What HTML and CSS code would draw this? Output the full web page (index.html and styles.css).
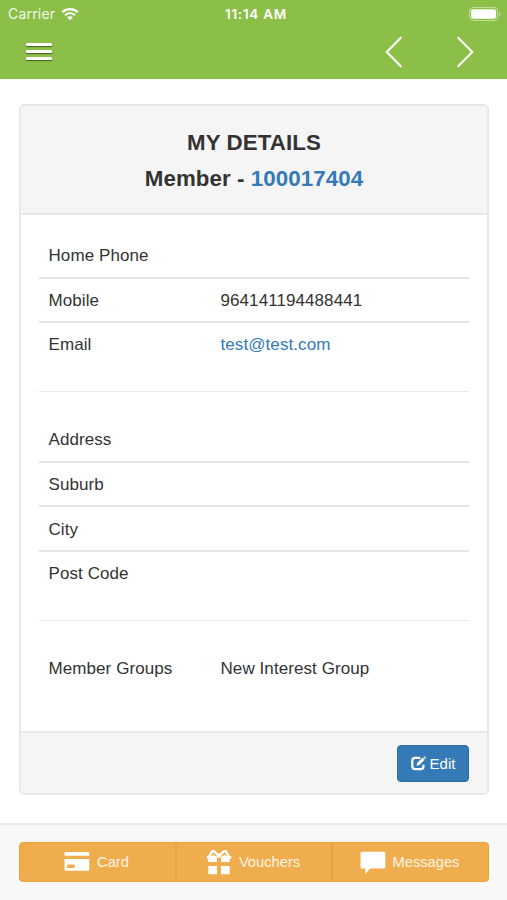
FILE: index.html
```html
<!DOCTYPE html>
<html lang="en">
<head>
    <meta charset="UTF-8">
    <meta name="viewport" content="width=device-width, initial-scale=1.0">
    <title>My Details</title>
    <link rel="stylesheet" href="styles.css">
</head>
<body>
    <header class="top">
        <div class="status">
            <span class="carrier">Carrier
                <svg class="wifi" width="18" height="14" viewBox="0 0 18 14">
                    <path d="M1.2 5.2C5.7 1 12.3 1 16.8 5.2" fill="none" stroke="#fff" stroke-width="2.3"/>
                    <path d="M4 8.2C6.9 5.6 11.1 5.6 14 8.2" fill="none" stroke="#fff" stroke-width="2.2"/>
                    <path d="M6 10.3C7.8 8.8 10.2 8.8 12 10.3L9 13.3Z" fill="#fff"/>
                </svg>
            </span>
            <span class="time">11:14 AM</span>
            <svg class="battery" width="32" height="14" viewBox="0 0 32 14">
                <rect x="0.5" y="0.5" width="28" height="13" rx="3.5" fill="none" stroke="#c1dd99"/>
                <rect x="2" y="2.2" width="25" height="9.6" rx="2" fill="#fff"/>
                <path d="M30 5C31.7 5.6 31.7 8.4 30 9Z" fill="#c1dd99"/>
            </svg>
        </div>
        <nav class="nav">
            <button class="menu" aria-label="Menu"><i></i><i></i><i></i></button>
            <div class="arrows">
                <svg width="18" height="32" viewBox="0 0 18 32"><path d="M16.3 1.3L1.7 16L16.3 30.7"/></svg>
                <svg width="18" height="32" viewBox="0 0 18 32"><path d="M1.7 1.3L16.3 16L1.7 30.7"/></svg>
            </div>
        </nav>
    </header>

    <main class="panel">
        <div class="panel-heading">
            <h1>MY DETAILS</h1>
            <h1>Member - <a href="#">100017404</a></h1>
        </div>
        <div class="panel-body">
            <dl class="rows">
                <div class="row"><dt>Home Phone</dt><dd></dd></div>
                <div class="row"><dt>Mobile</dt><dd>964141194488441</dd></div>
                <div class="row"><dt>Email</dt><dd><a href="#">test@test.com</a></dd></div>
            </dl>
            <hr>
            <dl class="rows">
                <div class="row"><dt>Address</dt><dd></dd></div>
                <div class="row"><dt>Suburb</dt><dd></dd></div>
                <div class="row"><dt>City</dt><dd></dd></div>
                <div class="row"><dt>Post Code</dt><dd></dd></div>
            </dl>
            <hr>
            <dl class="rows">
                <div class="row"><dt>Member Groups</dt><dd>New Interest Group</dd></div>
            </dl>
        </div>
        <div class="panel-footer">
            <button class="edit">
                <svg width="16" height="15" viewBox="0 0 16 15">
                    <path d="M9.3 1.9H4.2Q1.3 1.9 1.3 4.8V10.2Q1.3 13.1 4.2 13.1H9.6Q12.5 13.1 12.5 10.2V8.7" fill="none" stroke="#fff" stroke-width="2.2"/>
                    <path d="M5.4 9.8L6.3 6.7L11.6 1.6L13.7 3.7L8.4 9Z" fill="#fff"/>
                    <path d="M12.4 0.9L13.2 0.2L15.2 2.1L14.4 3Z" fill="#fff"/>
                </svg>
                Edit
            </button>
        </div>
    </main>

    <footer class="bottom">
        <div class="tabs">
            <button class="tab">
                <svg width="26" height="26" viewBox="0 0 26 26">
                    <path d="M0.5 4.3Q0.5 3 1.8 3H24Q25.3 3 25.3 4.3V6.7H0.5Z" fill="#fff"/>
                    <path fill-rule="evenodd" d="M0.5 10H25.3V20.5Q25.3 21.8 24 21.8H1.8Q0.5 21.8 0.5 20.5ZM3.2 15.4V19H10.6V15.4Z" fill="#fff"/>
                </svg>
                <span>Card</span>
            </button>
            <button class="tab">
                <svg width="26" height="26" viewBox="0 0 26 26">
                    <path d="M3.2 7.5L5.8 2.8Q6.6 1.6 8 2.4L13 6.4L18 2.4Q19.4 1.6 20.2 2.8L22.8 7.5" fill="none" stroke="#fff" stroke-width="2.4"/>
                    <path d="M0.8 7H5.6L7.4 5.8L11 8.2V13H2.3V9.8H0.8ZM25.2 7H20.4L18.6 5.8L15 8.2V13H23.7V9.8H25.2ZM2.3 17H11V25.2H2.3ZM15 17H23.7V25.2H15Z" fill="#fff"/>
                    <path d="M10.2 7L13 4.6L15.8 7L14.4 8.6H11.6Z" fill="#fff"/>
                </svg>
                <span>Vouchers</span>
            </button>
            <button class="tab">
                <svg width="26" height="26" viewBox="0 0 26 26">
                    <path d="M1.8 2.8H24Q25.3 2.8 25.3 4.1V18.3Q25.3 19.6 24 19.6H10.3L5.3 25V19.6H1.8Q0.5 19.6 0.5 18.3V4.1Q0.5 2.8 1.8 2.8Z" fill="#fff"/>
                </svg>
                <span>Messages</span>
            </button>
        </div>
    </footer>
</body>
</html>
```
FILE: styles.css
```css
* {
    box-sizing: border-box;
}
body {
    display: flex;
    flex-direction: column;
    height: 900px;
    margin: 0;
    background-color: #fff;
    color: #333;
    font-family: "Liberation Sans", Arial, sans-serif;
    font-size: 17px;
    letter-spacing: 0.08px;
    overflow: hidden;
}
a {
    color: #337ab7;
    text-decoration: none;
}
button {
    margin: 0;
    padding: 0;
    border: 0;
    background: none;
    color: #fff;
    font-family: inherit;
}

/* green bar */
.top {
    height: 79px;
    background-color: #8bbf48;
    color: #fff;
}
.status {
    display: grid;
    grid-template-columns: 1fr auto 1fr;
    align-items: center;
    height: 27px;
    padding: 0 6px 0 8px;
    font-family: Inter, sans-serif;
}
.carrier {
    display: flex;
    align-items: center;
    gap: 6px;
    color: #f1f8e5;
    font-size: 14px;
    letter-spacing: 0.2px;
}
.time {
    font-size: 13.5px;
    font-weight: 600;
    letter-spacing: 0.75px;
    padding-left: 3px;
}
.battery {
    justify-self: end;
}
.nav {
    display: flex;
    justify-content: space-between;
    align-items: center;
    height: 50px;
    padding: 0 33px 0 26px;
}
.menu {
    display: flex;
    flex-direction: column;
    gap: 4px;
    width: 26px;
    margin-bottom: 2px;
}
.menu i {
    height: 3px;
    border-radius: 1px;
    background-color: #fff;
    box-shadow: 0 1px 1px rgba(0, 0, 0, 0.5);
}
.arrows {
    display: flex;
    gap: 53px;
}
.arrows path {
    fill: none;
    stroke: #fff;
    stroke-width: 2;
}

/* details panel */
.panel {
    height: 691px;
    margin: 25px 18px 0 19px;
    border: 2px solid #e8e8e8;
    border-radius: 5px;
    display: flex;
    flex-direction: column;
}
.panel-heading {
    height: 109px;
    padding-top: 19px;
    border-bottom: 2px solid #e8e8e8;
    background-color: #f5f5f5;
    text-align: center;
}
.panel-heading h1 {
    margin: 0;
    font-size: 22.3px;
    line-height: 35.5px;
}
.panel-body {
    flex: 1;
    padding: 17px 18px 0;
}
.rows {
    margin: 0;
}
.row {
    display: grid;
    grid-template-columns: 40% 60%;
    align-items: center;
    height: 44.7px;
    padding-top: 1.5px;
    border-top: 2px solid transparent;
}
.row + .row {
    border-top-color: #e5e5e5;
}
dt, dd {
    margin: 0;
    padding-left: 9.5px;
}
hr {
    margin: 25px 0 24px;
    border: 0;
    border-top: 1px solid #eaeaea;
}
.panel-footer {
    display: flex;
    justify-content: flex-end;
    align-items: center;
    height: 62px;
    padding-right: 18px;
    border-top: 2px solid #e8e8e8;
    background-color: #f5f5f5;
}
.edit {
    display: flex;
    justify-content: center;
    align-items: center;
    gap: 3px;
    width: 72px;
    height: 37px;
    border: 1px solid #2e6da4;
    border-radius: 4px;
    background-color: #337ab7;
    font-size: 15px;
}

/* bottom bar */
.bottom {
    height: 77px;
    margin-top: auto;
    padding: 17px 18px 0 19px;
    border-top: 2px solid #ebebeb;
    background-color: #f8f8f8;
}
.tabs {
    display: grid;
    grid-template-columns: 155px 156px 157px;
    height: 40px;
    border: 1px solid #eea236;
    border-radius: 4px;
    background-color: #f0ad4e;
    overflow: hidden;
}
.tab {
    display: flex;
    justify-content: center;
    align-items: center;
    gap: 7px;
    padding-right: 2px;
    font-size: 14.7px;
    color: #fff5e4;
}
.tab + .tab {
    border-left: 2px solid #eba43b;
}
```
